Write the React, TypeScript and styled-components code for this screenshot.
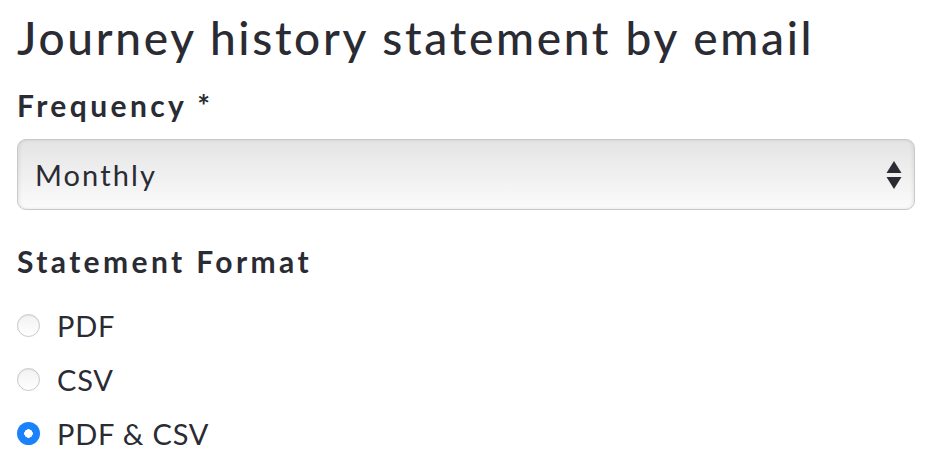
import React from "react";
import styled, { createGlobalStyle } from "styled-components";

const Global = createGlobalStyle`
  html, body { margin: 0; padding: 0; background: #fff; }
  body { font-family: Lato, "Open Sans", sans-serif; color: #2a2b33; }
`;

const Page = styled.div`
  padding: 7px 19px 0 17px;
  display: flex;
  flex-direction: column;
`;

const Title = styled.h1`
  margin: 0;
  font-size: 46px;
  font-weight: 500;
  line-height: 62px;
  letter-spacing: 2.7px;
`;

const Label = styled.div<{ $mt: number }>`
  margin-top: ${(p) => p.$mt}px;
  font-size: 30px;
  font-weight: 700;
  line-height: 40px;
  letter-spacing: 3.4px;
`;

const SelectBox = styled.div`
  margin-top: 14px;
  height: 71px;
  box-sizing: border-box;
  border: 1.5px solid #c9c9c9;
  border-radius: 9px;
  background: linear-gradient(#e4e4e4, #fbfbfb);
  box-shadow: inset 2px 0 3px rgba(0,0,0,0.06), inset -2px 0 3px rgba(0,0,0,0.06);
  display: flex;
  align-items: center;
  justify-content: space-between;
  padding: 0 12px 0 17px;
  font-size: 29px;
  letter-spacing: 2.1px;
`;

const Arrows = styled.svg`
  width: 16px;
  height: 30px;
`;

const RadioList = styled.div`
  margin-top: 24px;
  display: flex;
  flex-direction: column;
  gap: 14px;
`;

const Row = styled.label`
  display: flex;
  align-items: center;
  gap: 17px;
  height: 40px;
  font-size: 29px;
  letter-spacing: 0.8px;
`;

const Circle = styled.span<{ $on: boolean }>`
  width: 23px;
  height: 23px;
  box-sizing: border-box;
  border-radius: 50%;
  flex: none;
  ${(p) =>
    p.$on
      ? `background: radial-gradient(circle, #fff 0 4px, #1a82fb 4.5px);`
      : `border: 1px solid #c8c8c8; background: linear-gradient(#f2f2f2, #ffffff); box-shadow: inset 0 1px 1px rgba(0,0,0,0.06);`}
`;

const options = [
  { label: "PDF", on: false },
  { label: "CSV", on: false },
  { label: "PDF & CSV", on: true },
];

export default function App() {
  return (
    <>
      <Global />
      <Page>
        <Title>Journey history statement by email</Title>
        <Label $mt={16}>Frequency *</Label>
        <SelectBox>
          <span>Monthly</span>
          <Arrows viewBox="0 0 16 30">
            <path d="M8 1 L15.5 13 H0.5 Z" fill="#2a2b33" />
            <path d="M0.5 17 H15.5 L8 29 Z" fill="#2a2b33" />
          </Arrows>
        </SelectBox>
        <Label $mt={31}>Statement Format</Label>
        <RadioList>
          {options.map((o) => (
            <Row key={o.label}>
              <Circle $on={o.on} />
              {o.label}
            </Row>
          ))}
        </RadioList>
      </Page>
    </>
  );
}
